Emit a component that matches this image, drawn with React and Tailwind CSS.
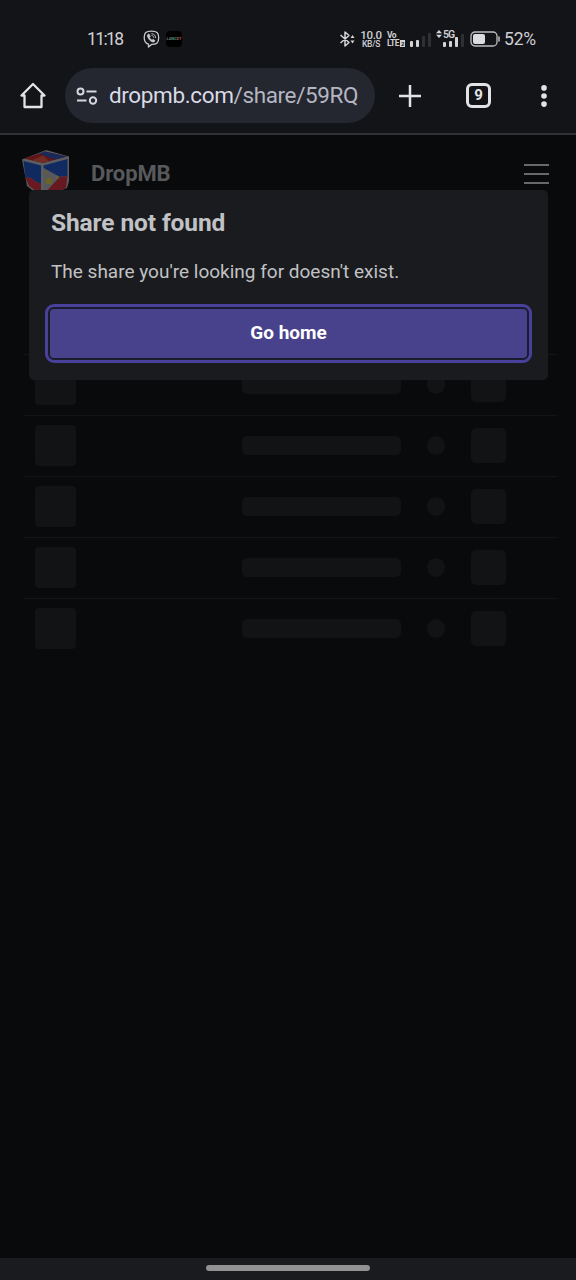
import React from "react";

const rows = [0, 1, 2, 3, 4];

const Bars = ({ heights, lit }) => (
    <div className="flex items-end gap-[3px] h-[14px]">
        {heights.map((height, i) => (
            <span
                key={i}
                className={`w-[3px] rounded-[1px] ${i < lit ? "bg-[#d4d4d6]" : "bg-[#303034]"}`}
                style={{ height }}
            ></span>
        ))}
    </div>
);

const ViberIcon = () => (
    <svg className="shrink-0" width="17" height="18" viewBox="0 0 17 18" fill="none" stroke="#c9c9cb" strokeLinecap="round" strokeLinejoin="round">
        <path d="M5.5 14.2C2.300 13.500 1.200 12 1.200 7.600C1.200 2.500 3 1.100 8.300 1.100C13.800 1.100 15.700 2.600 15.700 7.600C15.700 12.800 13.800 14.500 8.500 14.400L5.500 17Z" strokeWidth="1.300" />
        <path d="M5.200 4.100C3.700 5 4.300 6.600 5.400 8.400C6.600 10.400 8.300 11.600 10.200 12.100C11.300 12.200 12.300 11 11.900 10.500L10.200 9.300L9 10C7.700 9.400 7 8.500 6.500 7.200L7.300 6.200L6.300 4.400Z" fill="#c9c9cb" strokeWidth=".6" />
        <path d="M8.700 3.700C11.200 3.900 12.500 5.200 12.600 7.700M8.900 5.600C10.100 5.700 10.700 6.400 10.800 7.400" strokeWidth=".9" />
    </svg>
);

const StatusBar = () => (
    <div className="flex items-center h-[60px] pt-[18px] pl-[87px] text-[#cfcfd2] shrink-0">
        <span className="w-[56px] text-[17.5px] leading-[42px] tracking-[-1.6px]">11:18</span>
        <ViberIcon />
        <div className="ml-[6px] w-4 h-4 shrink-0 rounded-[4px] bg-black flex items-center justify-center text-[4px] font-bold leading-none">
            <span className="text-[#777]">LA</span>
            <span className="text-[#4b9a78]">NC</span>
            <span className="text-[#a35a55]">ET</span>
        </div>
        <svg className="ml-[157px] shrink-0" width="16" height="18" viewBox="0 0 16 18" fill="none" stroke="#d4d4d6" strokeWidth="1.500">
            <path d="M1.500 5L10 12.500L6 16V2L10 5.500L1.500 13" strokeLinejoin="round" />
            <path d="M11.500 8L13.500 5L15.500 8ZM11.500 10.500L13.500 13.500L15.500 10.500Z" fill="#d4d4d6" stroke="none" />
        </svg>
        <div className="ml-[5px] w-[22px] flex flex-col items-center font-medium whitespace-nowrap">
            <span className="text-[11.500px] leading-[10px] tracking-[-0.3px]">10.0</span>
            <span className="text-[8.500px] leading-[9px] tracking-[-0.3px]">KB/S</span>
        </div>
        <div className="ml-[5px] w-[18px] shrink-0 flex flex-col font-bold tracking-[-0.5px]">
            <span className="text-[8.500px] leading-[8px]">Vo</span>
            <span className="flex items-center text-[8.500px] leading-[9px] tracking-[-0.6px]">
                LTE<span className="ml-px bg-[#d4d4d6] text-[#131418] text-[6px] leading-[7px] px-px">2</span>
            </span>
        </div>
        <div className="ml-[5px] pt-[1px]">
            <Bars heights={[6, 7, 11, 14]} lit={2} />
        </div>
        <div className="relative ml-[12px] pt-[1px]">
            <Bars heights={[5, 6, 10, 13]} lit={3} />
            <span className="absolute -left-[7px] -top-[2px] flex items-center gap-px text-[10.500px] leading-[9px] tracking-[-0.9px] font-semibold">
                <svg width="6" height="8" viewBox="0 0 6 8" fill="#d4d4d6">
                    <path d="M0 3.300L3 0L6 3.300ZM0 4.700L3 8L6 4.700Z" />
                </svg>
                5G
            </span>
        </div>
        <svg className="ml-[6px] shrink-0" width="30" height="16" viewBox="0 0 30 16" fill="none">
            <rect x="1" y="1" width="26" height="14" rx="4" stroke="#bdbdbf" strokeWidth="1.300" />
            <rect x="3" y="3" width="12" height="10" rx="2" fill="#dcdcde" />
            <path d="M29 6V10" stroke="#bdbdbf" strokeWidth="1.500" strokeLinecap="round" />
        </svg>
        <span className="ml-[4px] text-[17.500px] tracking-[-0.2px]">52%</span>
    </div>
);

const Toolbar = () => (
    <div className="flex items-center h-[75px] pb-[2px] pl-[20px] border-b-2 border-[#303134] shrink-0">
        <svg className="relative -top-px" width="26" height="28" viewBox="0 0 26 28" fill="none" stroke="#e3e3e6" strokeWidth="2.300" strokeLinejoin="round">
            <path d="M1.500 14.500L13 3L24.500 14.500H21.500V26H4.500V14.500Z" />
        </svg>
        <div className="ml-[19px] w-[310px] h-[55px] rounded-full bg-[#242630] flex items-center pl-[11px]">
            <svg className="shrink-0" width="22" height="18" viewBox="0 0 22 18" fill="none" stroke="#d5d6df" strokeWidth="2">
                <circle cx="4.500" cy="4.500" r="3" />
                <path d="M10.500 4.500H20.500M1 13.500H10.500" />
                <circle cx="17" cy="13.500" r="3.200" />
            </svg>
            <span className="ml-[11px] text-[22.500px] tracking-[-0.370px] whitespace-nowrap text-[#d9dae5]">
                dropmb.com<span className="text-[#b5b6c1]">/share/59RQ</span>
            </span>
        </div>
        <svg className="ml-[24px]" width="22" height="22" viewBox="0 0 22 22" stroke="#e3e3e6" strokeWidth="2.500">
            <path d="M11 0V22M0 11H22" />
        </svg>
        <div className="ml-[45px] w-[25px] h-[25px] rounded-[6px] border-[3px] border-[#e3e3e6] flex items-center justify-center text-[15px] leading-none font-bold text-[#e3e3e6]">
            9
        </div>
        <svg className="ml-[49px]" width="8" height="24" viewBox="0 0 8 24" fill="#e3e3e6">
            <circle cx="4" cy="3.900" r="2.800" />
            <circle cx="4" cy="12" r="2.800" />
            <circle cx="4" cy="20.100" r="2.800" />
        </svg>
    </div>
);

const Logo = () => (
    <svg width="50" height="48" viewBox="0 0 50 48">
        <path d="M1 9.500L25 0L48 6.500V31L46 38L20 47L6 36Z" fill="#5b5d60" />
        <path d="M3 8.500L24 1.500L46 6.500L22 13Z" fill="#601519" />
        <path d="M24 1.500L46 6.500L34 9.500L18 3.500Z" fill="#182b58" />
        <path d="M11 10.500L22 5.500L28 11L22 12.500Z" fill="#712c24" />
        <path d="M2.500 11L20 15.500V33C14 34 11 25 4.500 28Z" fill="#10295f" />
        <path d="M4.500 28C11 25 14 34 20 33V45L8 36Z" fill="#681a20" />
        <path d="M22.500 15.500L46.500 9V26L38 27L22.500 18Z" fill="#122a62" />
        <path d="M46.500 26L38 27L24 43V46L45 38Z" fill="#66191f" />
        <path d="M22.500 18L39 27L22.500 43Z" fill="#56585b" />
        <circle cx="28" cy="31" r="3.300" fill="#6c6424" />
        <path d="M24 21.500H26V23.500H24ZM35 26H37V28H35Z" fill="#6c6424" />
    </svg>
);

const SkeletonRow = () => (
    <div className="flex items-center h-[61px] pb-px pl-[11px] border-b border-[#141517]">
        <div className="w-[41px] h-[41px] rounded-[4px] bg-[#121315]"></div>
        <div className="ml-[166px] w-[159px] h-[19px] rounded-[5px] bg-[#121315]"></div>
        <div className="ml-[26px] w-[18px] h-[19px] rounded-full bg-[#121315]"></div>
        <div className="ml-[26px] w-[35px] h-[35px] rounded-[5px] bg-[#121315]"></div>
    </div>
);

const Dialog = () => (
    <div className="absolute left-[29px] top-[55px] w-[519px] h-[190px] rounded-[5px] bg-[#1a1b1e] px-[22px] pt-[17px]">
        <h2 className="text-[24.500px] leading-[32px] font-bold tracking-[-0.1px] text-[#c1c2c5] whitespace-nowrap">Share not found</h2>
        <p className="mt-[19px] text-[19px] leading-[28px] text-[#c1c2c5] whitespace-nowrap">
            The share you're looking for doesn't exist.
        </p>
        <button className="block mt-[23px] -ml-px w-[477px] h-[49px] rounded-[4px] bg-[#48428c] text-[19px] font-bold text-white ring-2 ring-[#1a1b2c] outline-[3px] outline-solid outline-[#48409a] outline-offset-2">
            Go home
        </button>
    </div>
);

const App = () => {
    return (
        <div className="w-[576px] h-[1280px] flex flex-col overflow-hidden bg-[#131418] font-['Roboto',sans-serif]">
            <StatusBar />
            <Toolbar />
            <main className="relative flex-1 bg-[#090a0c]">
                <header className="flex items-center h-[77px] pl-[21px] pr-[27px]">
                    <Logo />
                    <span className="ml-[20px] text-[22px] font-bold tracking-[-0.1px] text-[#58595b]">DropMB</span>
                    <div className="ml-auto w-[25px] h-5 flex flex-col justify-between">
                        <span className="h-[2px] bg-[#68696b]"></span>
                        <span className="h-[2px] bg-[#68696b]"></span>
                        <span className="h-[2px] bg-[#68696b]"></span>
                    </div>
                </header>
                <div className="mt-[142px] mx-[24px] w-[533px] border-t border-[#141517] [&>div:last-child]:border-transparent">
                    {rows.map((row) => (
                        <SkeletonRow key={row} />
                    ))}
                </div>
                <Dialog />
            </main>
            <footer className="h-[22px] shrink-0 bg-[#1a1b1e] flex justify-center pt-[7px]">
                <div className="w-[164px] h-[6px] rounded-full bg-[#929295]"></div>
            </footer>
        </div>
    );
};

export default App;
